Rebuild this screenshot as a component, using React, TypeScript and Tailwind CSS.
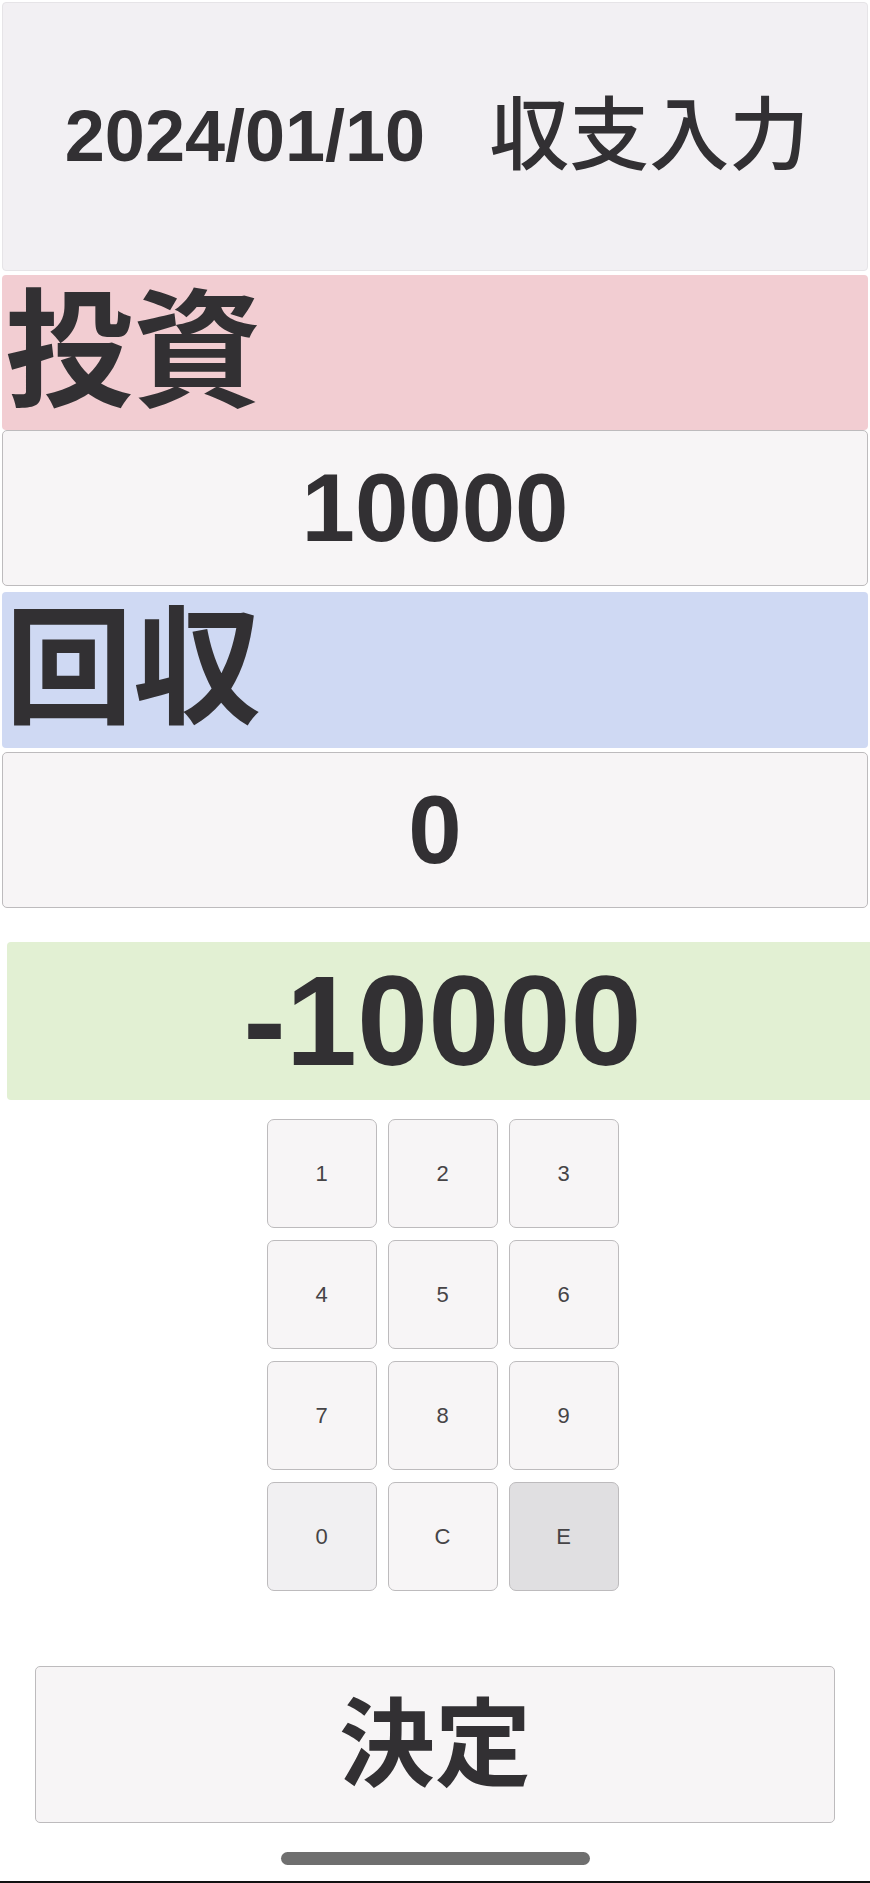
import { useState } from "react";

const KEYS: { label: string; bg: string }[] = [
  { label: "1", bg: "bg-[#f7f5f6]" },
  { label: "2", bg: "bg-[#f7f5f6]" },
  { label: "3", bg: "bg-[#f7f5f6]" },
  { label: "4", bg: "bg-[#f7f5f6]" },
  { label: "5", bg: "bg-[#f7f5f6]" },
  { label: "6", bg: "bg-[#f7f5f6]" },
  { label: "7", bg: "bg-[#f7f5f6]" },
  { label: "8", bg: "bg-[#f7f5f6]" },
  { label: "9", bg: "bg-[#f7f5f6]" },
  { label: "0", bg: "bg-[#f1f0f2]" },
  { label: "C", bg: "bg-[#f7f5f6]" },
  { label: "E", bg: "bg-[#e0dfe1]" },
];

const FONT = "font-['Liberation_Sans','Noto_Sans_CJK_JP',sans-serif]";

function Label({ text, bg, h }: { text: string; bg: string; h: string }) {
  return (
    <div className={`flex ${h} items-center rounded-[4px] ${bg} pl-[3px]`}>
      <span className="text-[128px] font-bold leading-none text-[#323033]">
        {text}
      </span>
    </div>
  );
}

function Value({ value }: { value: number }) {
  return (
    <div className="flex h-[156px] items-center justify-center rounded-[5px] border border-[#bdbbbd] bg-[#f7f5f6]">
      <span className="text-[96px] font-bold leading-none text-[#323033]">
        {value}
      </span>
    </div>
  );
}

export default function App() {
  const [invest] = useState(10000);
  const [collect] = useState(0);

  return (
    <div className={`${FONT} flex min-h-[1883px] w-[870px] flex-col bg-white`}>
      <div className="flex flex-col px-[2px] pt-[2px]">
        <div className="flex h-[269px] items-center justify-center rounded-[4px] border border-[#e6e4e7] bg-[#f2f0f3] pb-[2px] pl-[4px] text-[#323033]">
          <span className="text-[72px] font-bold leading-none">2024/01/10</span>
          <span className="ml-[64px] text-[80px] font-medium leading-none">
            収支入力
          </span>
        </div>

        <div className="mt-[4px]">
          <Label text="投資" bg="bg-[#f2cdd2]" h="h-[155px]" />
        </div>
        <Value value={invest} />

        <div className="mt-[6px]">
          <Label text="回収" bg="bg-[#cfd9f3]" h="h-[156px]" />
        </div>
        <div className="mt-[4px]">
          <Value value={collect} />
        </div>
      </div>

      <div className="mt-[34px] ml-[7px] mr-[-8px] flex h-[158px] items-center justify-center rounded-[4px] bg-[#e2f0d3]">
        <span className="text-[128px] font-bold leading-none text-[#323033]">
          {collect - invest}
        </span>
      </div>

      <div className="mt-[19px] flex justify-center pl-[15px]">
        <div className="grid grid-cols-3 gap-x-[11px] gap-y-[12px]">
          {KEYS.map((k) => (
            <button
              key={k.label}
              className={`flex h-[109px] w-[110px] items-center justify-center rounded-[7px] border border-[#bdbbbd] ${k.bg} text-[22px] text-[#464446]`}
            >
              {k.label}
            </button>
          ))}
        </div>
      </div>

      <div className="mt-[75px] flex justify-center">
        <button className="flex h-[157px] w-[800px] items-center justify-center rounded-[5px] border border-[#bdbbbd] bg-[#f7f5f6]">
          <span className="text-[96px] font-bold leading-none text-[#323033]">
            決定
          </span>
        </button>
      </div>

      <div className="mt-[29px] flex justify-center">
        <div className="h-[13px] w-[309px] rounded-full bg-[#6f6f6f]" />
      </div>

      <div className="flex-1" />
      <div className="h-[2px] bg-[#111]" />
    </div>
  );
}
